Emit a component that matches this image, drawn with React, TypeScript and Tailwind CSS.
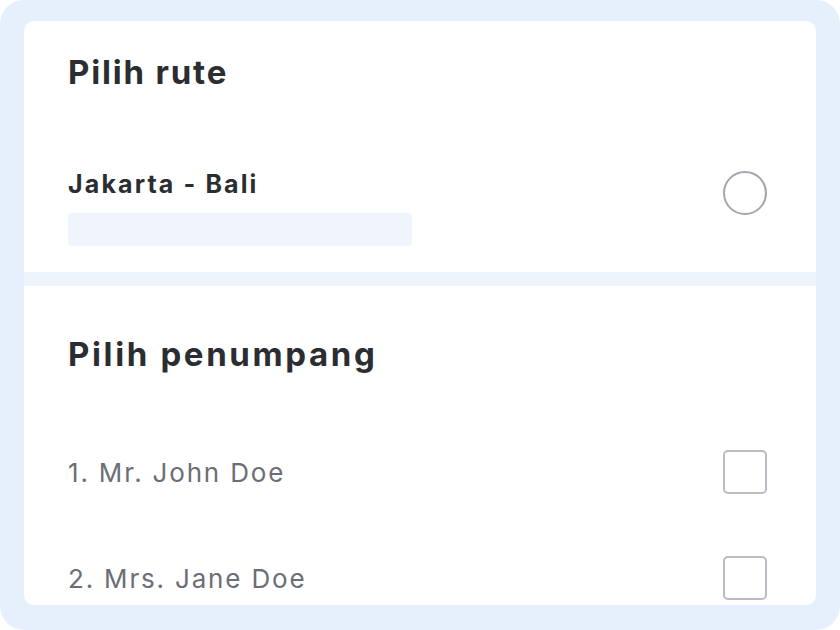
export default function App() {
  const passengers = ["1. Mr. John Doe", "2. Mrs. Jane Doe"];

  return (
    <div className="w-[840px] h-[630px] bg-white font-['Inter',sans-serif]">
      <div className="w-full h-full rounded-[24px] bg-[#e5f0fc] px-6 pt-[21px] pb-[25px]">
        <div className="h-full rounded-[10px] bg-white overflow-hidden flex flex-col">
          {/* Route */}
          <div className="h-[251px] pl-[44px] pr-[49px] pt-[31px]">
            <h2 className="text-[33px] leading-[40px] font-bold tracking-[0.055em] text-[#2b2d31]">Pilih rute</h2>
            <div className="mt-[76px] flex items-center justify-between">
              <div>
                <div className="text-[25px] leading-[32px] font-bold tracking-[0.085em] text-[#2b2d31]">Jakarta - Bali</div>
                <div className="mt-[13px] w-[344px] h-[33px] rounded-[4px] bg-[#f0f5fd]" />
              </div>
              <div className="w-[44px] h-[44px] rounded-full border-2 border-[#a3a6ad] -mt-[28px]" />
            </div>
          </div>

          <div className="h-[14px] bg-[#eef4fc]" />

          {/* Passengers */}
          <div className="pl-[44px] pr-[49px] pt-[48px]">
            <h2 className="text-[33px] leading-[40px] font-bold tracking-[0.08em] text-[#2b2d31]">Pilih penumpang</h2>
            <div className="mt-[76px] flex flex-col gap-[62px]">
              {passengers.map((p) => (
                <div key={p} className="flex items-center justify-between h-[44px]">
                  <span className="text-[26px] tracking-[0.07em] text-[#6b6e75]">{p}</span>
                  <div className="w-[44px] h-[44px] rounded-[5px] border-2 border-[#b9bcc3]" />
                </div>
              ))}
            </div>
          </div>
        </div>
      </div>
    </div>
  );
}
